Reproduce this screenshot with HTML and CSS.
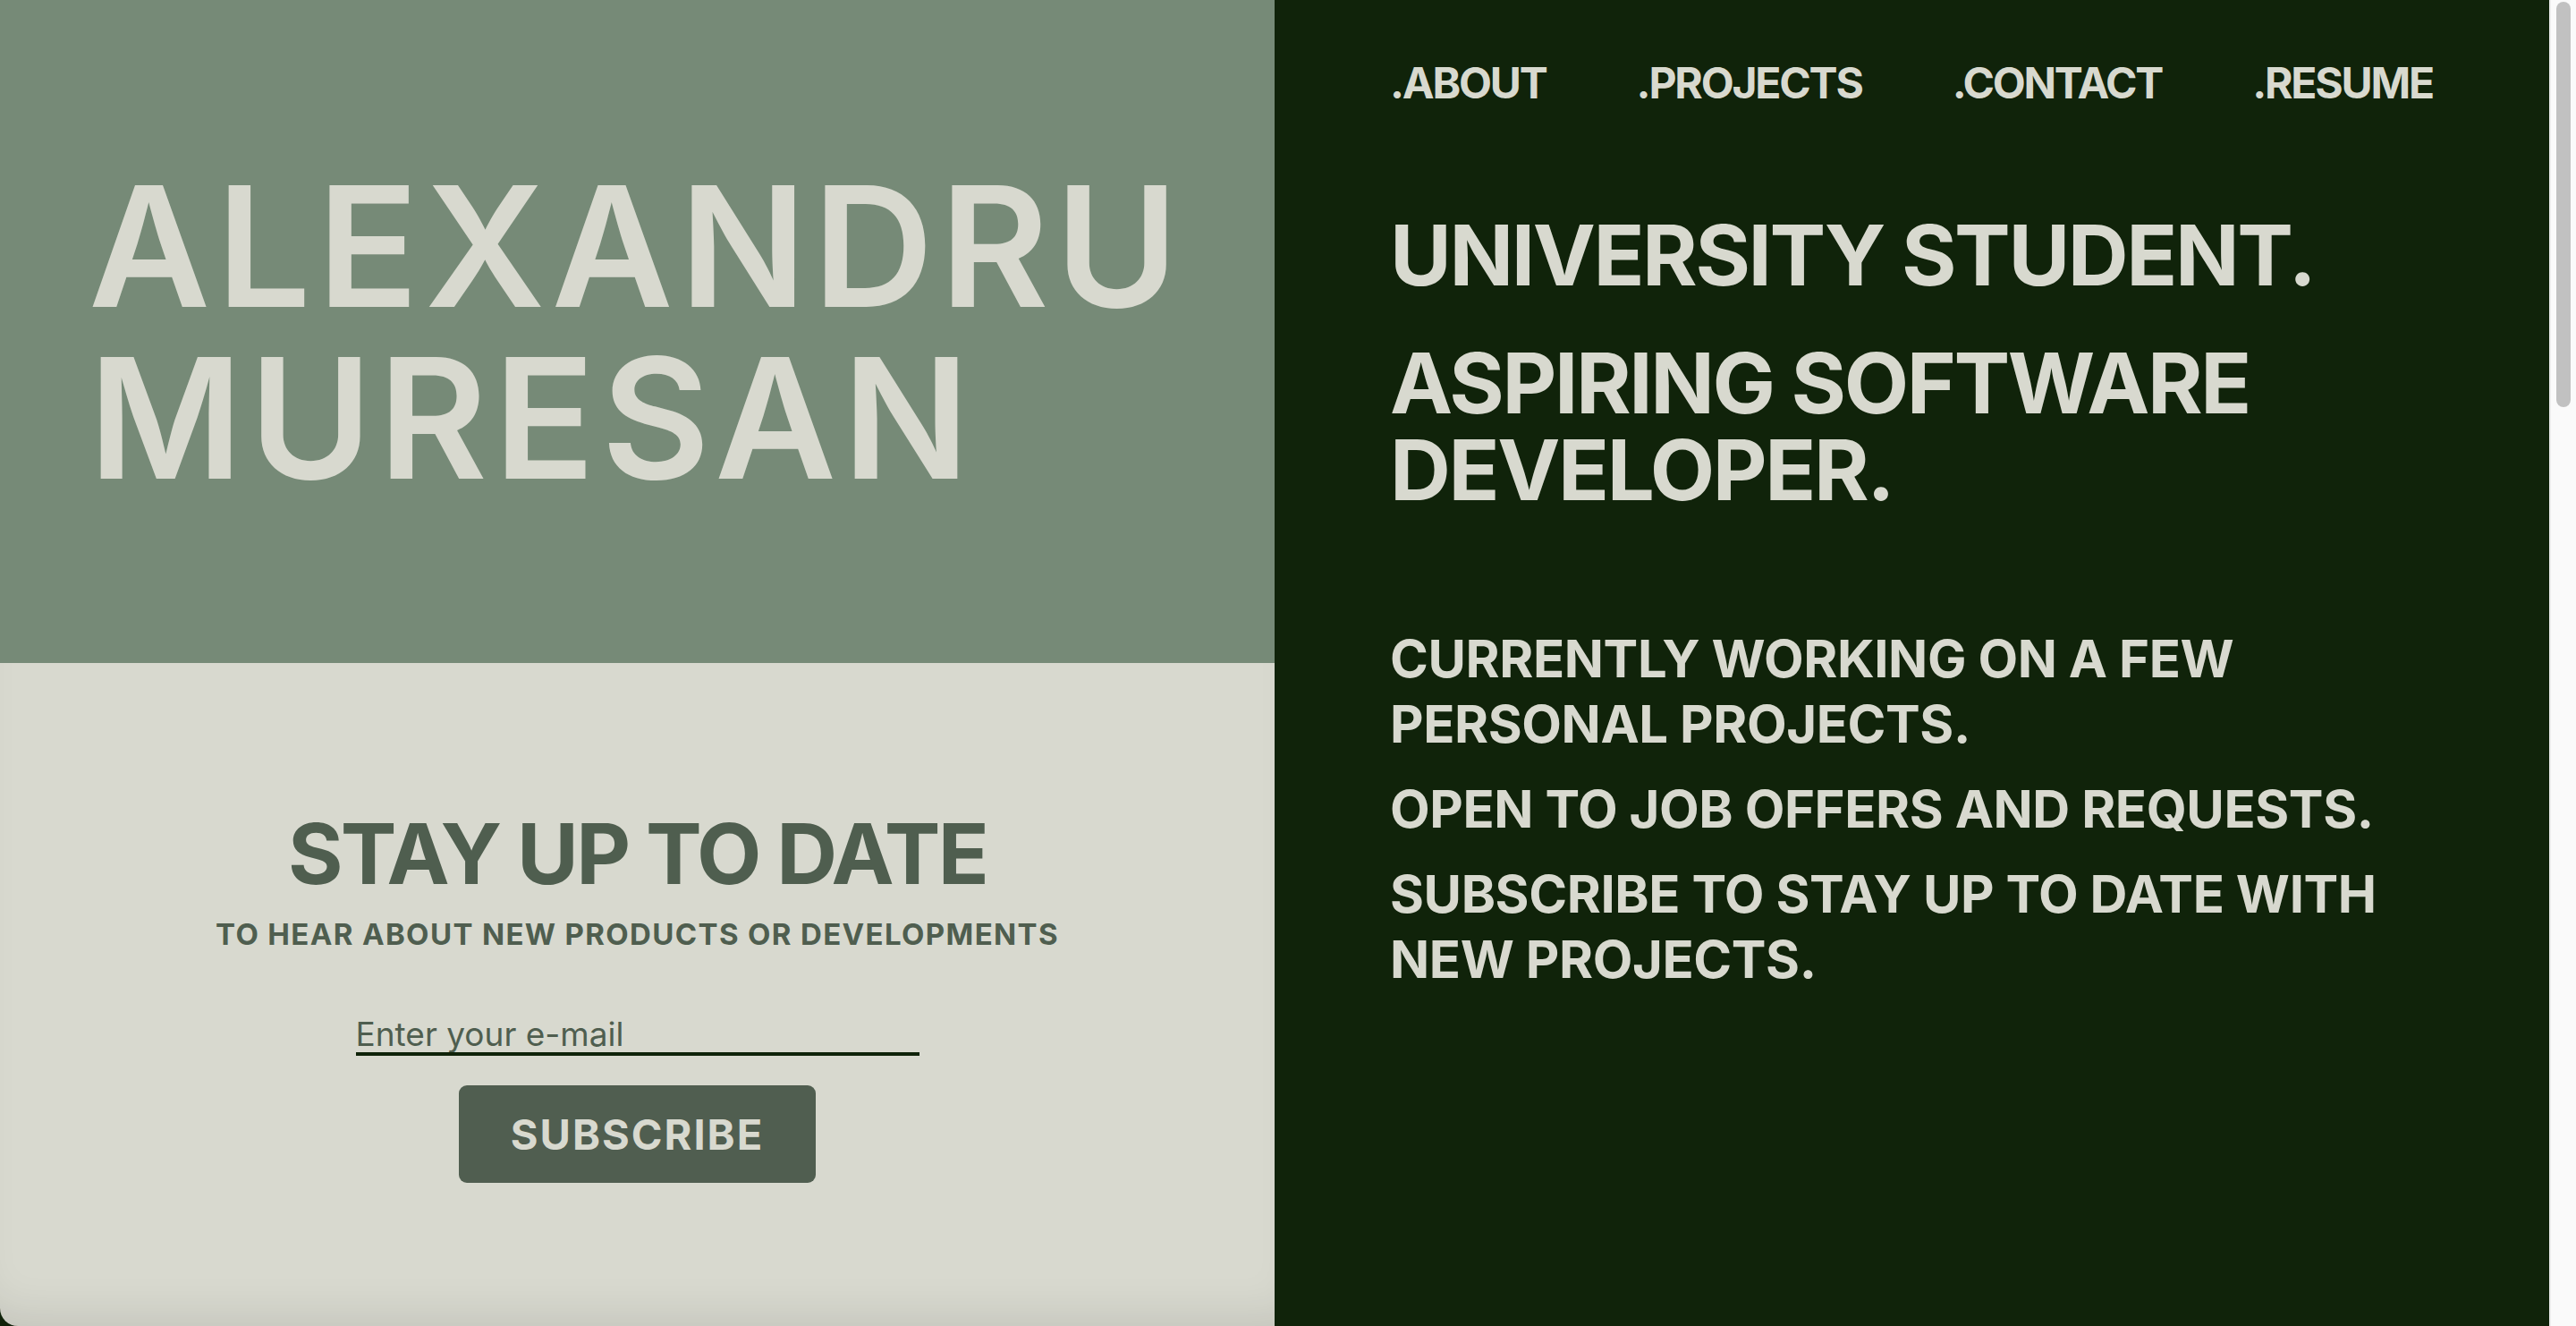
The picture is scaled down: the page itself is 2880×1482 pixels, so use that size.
FILE: index.html
```html
<!DOCTYPE html>
<html lang="en">
<head>
<meta charset="utf-8">
<title>Alexandru Muresan</title>
<link rel="stylesheet" href="styles.css">
</head>
<body>
<div class="page">
  <main class="hero">
    <section class="left">
      <div class="name-panel">
        <h1 class="name"><span class="name-line">ALEXANDRU</span><span class="name-line">MURESAN</span></h1>
      </div>
      <div class="subscribe-panel">
        <h2 class="sub-title">STAY UP TO DATE</h2>
        <p class="sub-text">TO HEAR ABOUT NEW PRODUCTS OR DEVELOPMENTS</p>
        <form class="sub-form">
          <input class="email" type="email" placeholder="Enter your e-mail">
          <button class="sub-btn" type="button">SUBSCRIBE</button>
        </form>
      </div>
    </section>
    <section class="right">
      <nav class="nav">
        <a href="#">.ABOUT</a>
        <a href="#">.PROJECTS</a>
        <a href="#">.CONTACT</a>
        <a href="#">.RESUME</a>
      </nav>
      <p class="big">UNIVERSITY STUDENT.</p>
      <p class="big">ASPIRING SOFTWARE DEVELOPER.</p>
      <div class="info">
        <p>CURRENTLY WORKING ON A FEW PERSONAL PROJECTS.</p>
        <p>OPEN TO JOB OFFERS AND REQUESTS.</p>
        <p>SUBSCRIBE TO STAY UP TO DATE WITH NEW PROJECTS.</p>
      </div>
    </section>
  </main>
  <div class="scrollbar" aria-hidden="true"><div class="thumb"></div></div>
</div>
</body>
</html>
```
FILE: styles.css
```css
html, body {
  margin: 0;
  padding: 0;
  height: 100%;
  overflow: hidden;
}
body {
  background: #10230a;
  font-family: Inter, "Noto Sans", "Liberation Sans", sans-serif;
  color: #d8d9cf;
}
.page {
  display: flex;
  height: 100vh;
}

.hero {
  flex: 1;
  display: grid;
  grid-template-columns: 1fr 1fr;
  height: 100%;
}

.scrollbar {
  width: 16px;
  background: #fafafa;
  border-left: 2px solid #ececec;
  padding: 2px 6px 0 6px;
}
.thumb {
  height: 453px;
  background: #c1c1c1;
  border-radius: 8px;
}

.left {
  display: flex;
  flex-direction: column;
}
.name-panel {
  height: 50%;
  background: #768a77;
  display: flex;
  flex-direction: column;
  justify-content: center;
  padding-left: 99px;
  box-sizing: border-box;
}
.name {
  margin: 0;
  font-size: 187px;
  font-weight: 600;
  letter-spacing: 7px;
  color: #d8d9cf;
  display: flex;
  flex-direction: column;
}
.name-line {
  display: block;
  line-height: 192px;
  height: 192px;
}

.subscribe-panel {
  height: 50%;
  background: #d8d9cf;
  box-sizing: border-box;
  padding-top: 165px;
  display: flex;
  flex-direction: column;
  align-items: center;
  color: #4f5e4f;
  border-bottom-left-radius: 20px;
  box-shadow: inset 0 -40px 50px -30px rgba(0, 0, 0, 0.1);
}
.sub-title {
  margin: 0;
  font-size: 94px;
  line-height: 97px;
  font-weight: 700;
  letter-spacing: -2.7px;
}
.sub-text {
  margin: 21px 0 0;
  font-size: 33px;
  line-height: 40px;
  font-weight: 700;
  letter-spacing: 1.35px;
}
.sub-form {
  display: flex;
  flex-direction: column;
  align-items: center;
  margin-top: 70px;
}
.email {
  width: 630px;
  height: 46px;
  box-sizing: border-box;
  padding: 0;
  border: none;
  border-bottom: 4px solid #10230a;
  background: transparent;
  font-family: inherit;
  font-size: 37px;
  line-height: 45px;
  color: #4f5e4f;
  outline: none;
}
.email::placeholder {
  color: #4f5e4f;
}
.sub-btn {
  margin-top: 33px;
  width: 399px;
  height: 109px;
  border: none;
  border-radius: 9px;
  background: #505e50;
  color: #d8d9cf;
  font-family: inherit;
  font-size: 47px;
  font-weight: 700;
  letter-spacing: 2px;
  cursor: pointer;
}

.right {
  padding: 64px 130px 0 129px;
}
.nav {
  display: flex;
  justify-content: space-between;
  font-size: 48px;
  line-height: 58px;
  font-weight: 700;
  letter-spacing: -2.2px;
}
.nav a {
  color: #d8d9cf;
  text-decoration: none;
}
.big {
  margin: 46px 0 0;
  font-size: 94px;
  line-height: 97px;
  font-weight: 700;
  letter-spacing: -2.4px;
}
.nav + .big {
  margin-top: 115px;
}
.info {
  margin-top: 126px;
}
.info p {
  margin: 0 0 22px;
  font-size: 58px;
  line-height: 73px;
  font-weight: 700;
  letter-spacing: -0.4px;
}
```
